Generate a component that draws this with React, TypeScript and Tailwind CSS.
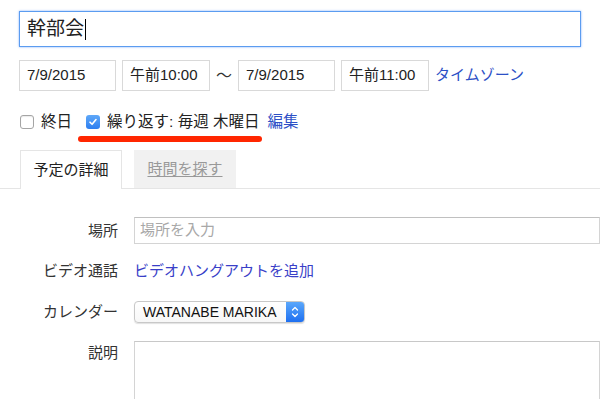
import React from 'react';

const FONT = "font-['Liberation_Sans','Noto_Sans_CJK_JP',sans-serif]";

function Box({ children, w }: { children: React.ReactNode; w: string }) {
  return (
    <div className={`${w} h-[31px] border border-[#d9d9d9] flex items-center pl-[7px] text-[15px] text-[#222]`}>
      {children}
    </div>
  );
}

function Label({ children, top }: { children: React.ReactNode; top?: boolean }) {
  return (
    <div className={`w-[118px] shrink-0 text-right text-[15px] text-[#333] leading-[20px] ${top ? 'pt-[2px]' : ''}`}>
      {children}
    </div>
  );
}

export default function App() {
  return (
    <div className={`w-[600px] h-[399px] overflow-hidden bg-white ${FONT}`}>
      <div className="pl-[19px] pt-[11px]">
        {/* title */}
        <div className="w-[562px] h-[36px] border border-[#5b9cf0] shadow-[0_0_2px_rgba(77,144,254,0.7)] flex items-center pl-[7px] text-[19px] text-[#222]">
          幹部会
          <span className="w-px h-[21px] bg-black ml-px" />
        </div>

        {/* dates */}
        <div className="mt-[13px] flex items-center gap-[6px]">
          <Box w="w-[97px]">7/9/2015</Box>
          <Box w="w-[88px]">午前10:00</Box>
          <span className="text-[16px] text-[#333]">〜</span>
          <Box w="w-[97px]">7/9/2015</Box>
          <Box w="w-[88px]">午前11:00</Box>
          <span className="text-[15px] text-[#2d50c6]">タイムゾーン</span>
        </div>

        {/* all day / repeat */}
        <div className="mt-[22px] flex items-center h-[18px] text-[15.5px] text-[#222]">
          <span className="w-[14px] h-[14px] rounded-[3px] border border-[#a5a5a5] bg-white shadow-[inset_0_1px_1px_rgba(0,0,0,0.08)] ml-px" />
          <span className="ml-[7px]">終日</span>
          <span className="ml-[14px] w-[14px] h-[14px] rounded-[3px] bg-gradient-to-b from-[#5fa8f8] to-[#2c7ef0] flex items-center justify-center">
            <svg width="10" height="10" viewBox="0 0 10 10">
              <path d="M2 5.2 L4.1 7.3 L8 2.6" fill="none" stroke="white" strokeWidth="1.6" strokeLinecap="round" strokeLinejoin="round" />
            </svg>
          </span>
          <span className="ml-[7px]">繰り返す: 毎週 木曜日</span>
          <span className="ml-[8px] text-[#2d50c6]">編集</span>
        </div>
        <div className="mt-[5px] ml-[59px] w-[184px] h-[6px] rounded-full bg-[#ff2600]" />
      </div>

      {/* tabs */}
      <div className="mt-[8px] flex items-end gap-[12px] pl-[20px] border-b border-[#e5e5e5] h-[39px]">
        <div className="w-[102px] h-[39px] -mb-px bg-white border border-b-0 border-[#e5e5e5] flex items-center justify-center text-[15px] text-[#222]">
          予定の詳細
        </div>
        <div className="w-[102px] h-[38px] bg-[#f1f1f1] flex items-center justify-center text-[15px] text-[#999] underline underline-offset-2">
          時間を探す
        </div>
      </div>

      {/* form */}
      <div className="pt-[28px] flex flex-col">
        <div className="flex items-center gap-[16px]">
          <Label>場所</Label>
          <div className="flex-1 h-[27px] border border-[#d4d4d4] border-t-[#c0c0c0] flex items-center pl-[5px] text-[15px] text-[#a8a8a8]">
            場所を入力
          </div>
        </div>
        <div className="mt-[17px] flex items-center gap-[16px]">
          <Label>ビデオ通話</Label>
          <span className="text-[15px] leading-[20px] text-[#3a3fc8]">ビデオハングアウトを追加</span>
        </div>
        <div className="mt-[20px] flex items-center gap-[16px]">
          <Label>カレンダー</Label>
          <div className="w-[171px] h-[22px] rounded-[4px] border border-[#c8c8c8] shadow-[0_1px_1px_rgba(0,0,0,0.12)] bg-gradient-to-b from-white to-[#f7f7f7] flex items-center overflow-hidden">
            <span className="flex-1 pl-[8px] text-[14px] text-[#111] leading-none">WATANABE MARIKA</span>
            <span className="w-[18px] h-full bg-gradient-to-b from-[#5aa7fb] to-[#1e6ff0] flex items-center justify-center">
              <svg width="8" height="14" viewBox="0 0 8 14">
                <path d="M1.5 5 L4 2.5 L6.5 5 M1.5 9 L4 11.5 L6.5 9" fill="none" stroke="white" strokeWidth="1.3" strokeLinecap="round" strokeLinejoin="round" />
              </svg>
            </span>
          </div>
        </div>
        <div className="mt-[18px] flex items-start gap-[16px]">
          <Label top>説明</Label>
          <div className="flex-1 h-[80px] border border-[#d4d4d4] border-t-[#c8c8c8]" />
        </div>
      </div>
    </div>
  );
}
